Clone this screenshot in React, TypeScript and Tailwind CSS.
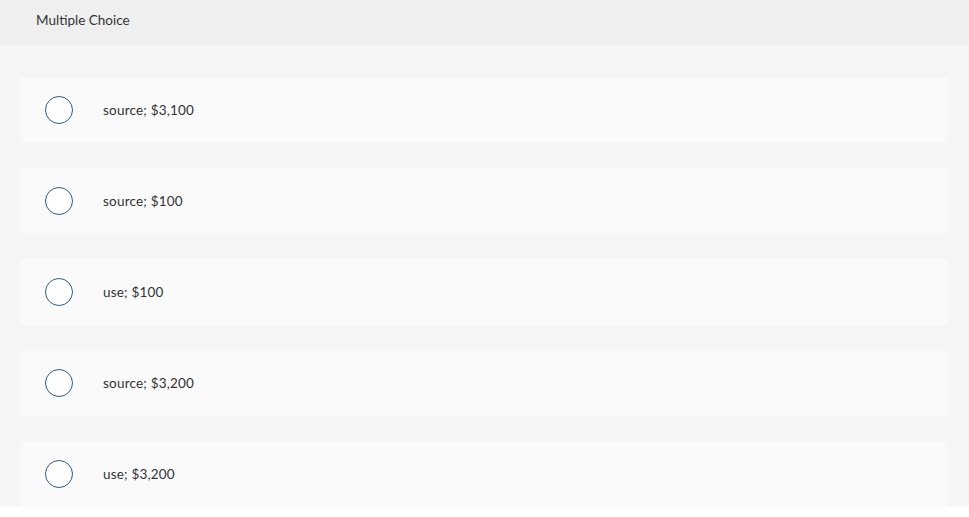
import React from "react";

const options = ["source; $3,100", "source; $100", "use; $100", "source; $3,200", "use; $3,200"];

export default function App() {
  return (
    <div className="w-[969px] bg-white" style={{ fontFamily: "Lato, 'Open Sans', sans-serif" }}>
      <div className="h-[45px] bg-[#efefef] flex items-center pl-9 pb-[4px]">
        <span className="text-[13.5px] text-[#333]">Multiple Choice</span>
      </div>
      <div className="bg-[#f5f5f5] pt-8 pl-5 pr-[21px] flex flex-col gap-[25px]">
        {options.map((o) => (
          <div key={o} className="h-[66px] bg-[#fafafa] rounded-[3px] flex items-center pl-[25px]">
            <div className="w-[28px] h-[28px] rounded-full border-[1.5px] border-[#2b5d8f] bg-white shrink-0" />
            <span className="ml-[30px] mt-[1px] text-[13.5px] tracking-[0.2px] text-[#333]">{o}</span>
          </div>
        ))}
      </div>
    </div>
  );
}
